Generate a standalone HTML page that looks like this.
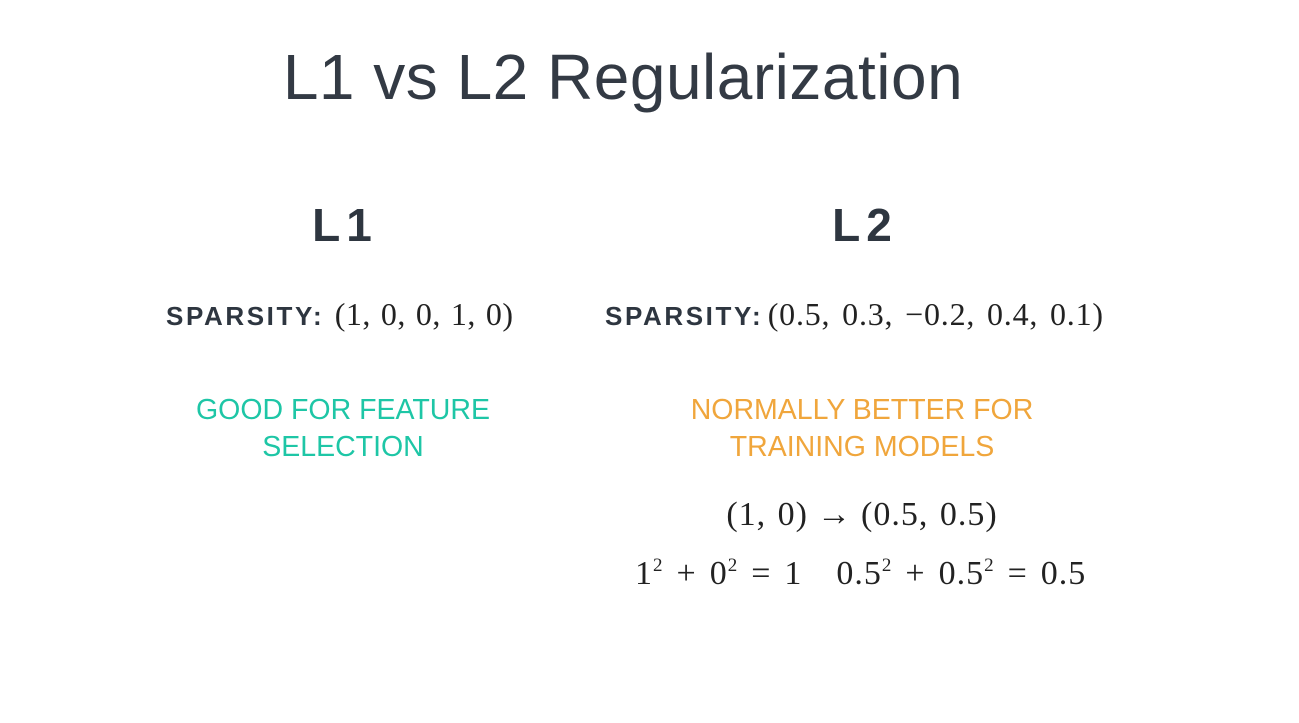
<!DOCTYPE html>
<html><head><meta charset="utf-8"><style>
body{margin:0;width:1299px;height:723px;background:#fff;position:relative;overflow:hidden;font-family:"Liberation Sans",sans-serif;color:#2e3640}
.a{position:absolute;white-space:nowrap}
.c{transform:translateX(-50%);text-align:center}
.m{font-family:"Liberation Serif",serif;font-size:32px;color:#222;letter-spacing:0.5px;word-spacing:0}
.b{font-weight:bold;font-size:26px;letter-spacing:2.6px}
.o{margin:0 9px}
.p{margin:0 13px}
sup{font-size:19px;vertical-align:13px;line-height:0}
</style></head><body>
<div class="a c" style="left:623px;top:40px;font-size:64px;color:#333a44;letter-spacing:0.5px">L1 vs L2 Regularization</div>
<div class="a c" style="left:345px;top:198px;font-size:46px;font-weight:bold;letter-spacing:6px;color:#2e3640">L1</div>
<div class="a c" style="left:865px;top:198px;font-size:46px;font-weight:bold;letter-spacing:6px;color:#2e3640">L2</div>
<div class="a" style="left:166px;top:296px"><span class="b">SPARSITY:</span> <span class="m" style="margin-left:6px;word-spacing:1.5px">(1, 0, 0, 1, 0)</span></div>
<div class="a" style="left:605px;top:296px"><span class="b">SPARSITY:</span> <span class="m" style="word-spacing:3px;letter-spacing:0.8px">(0.5, 0.3, &minus;0.2, 0.4, 0.1)</span></div>
<div class="a c" style="left:343px;top:392px;font-size:28.5px;line-height:37px;color:#1ec6a6">GOOD FOR FEATURE<br>SELECTION</div>
<div class="a c" style="left:862px;top:392px;font-size:28.5px;line-height:37px;color:#f0a63c">NORMALLY BETTER FOR<br>TRAINING MODELS</div>
<div class="a c m" style="left:862px;top:496px;font-size:34px;letter-spacing:1px;word-spacing:2px">(1, 0)<span class="o">&rarr;</span>(0.5, 0.5)</div>
<div class="a m" style="left:635px;top:555px;font-size:34px;word-spacing:0;letter-spacing:1px">1<sup>2</sup><span class="p">+</span>0<sup>2</sup><span class="p">=</span>1<span style="margin-left:34px">0.5</span><sup>2</sup><span class="p">+</span>0.5<sup>2</sup><span class="p">=</span>0.5</div>
</body></html>
